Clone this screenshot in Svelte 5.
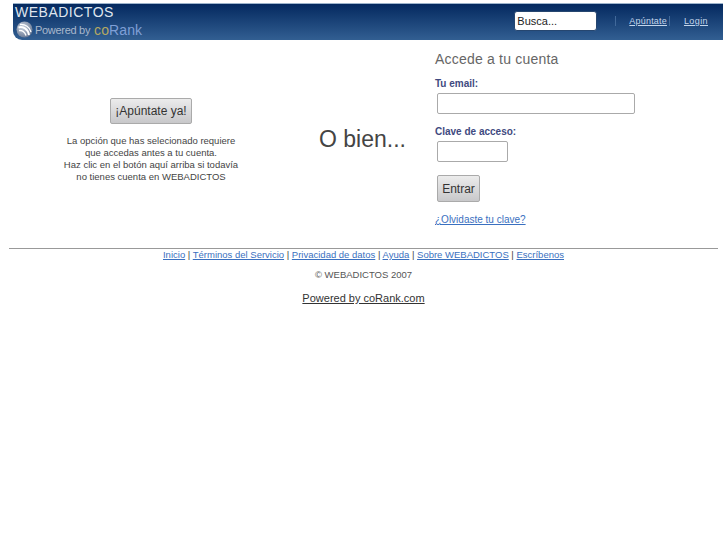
<script>
	const links = ['Inicio', 'Términos del Servicio', 'Privacidad de datos', 'Ayuda', 'Sobre WEBADICTOS', 'Escríbenos'];
</script>

<div class="page">
	<header class="topbar">
		<div class="brand">
			<div class="site-name">WEBADICTOS</div>
			<div class="powered">
				<svg class="logo" width="17" height="17" viewBox="0 0 17 17">
					<defs>
						<radialGradient id="ball" cx="0.4" cy="0.35" r="0.75">
							<stop offset="0" stop-color="#c9d2de" />
							<stop offset="1" stop-color="#5f6f8c" />
						</radialGradient>
					</defs>
					<circle cx="8.5" cy="8.5" r="8" fill="url(#ball)" />
					<path d="M2.5 6.5 C7 5 12 8 13 14" fill="none" stroke="#fff" stroke-width="2" />
					<path d="M4 3.5 C9 3 14 6 15 11" fill="none" stroke="#fff" stroke-width="1.3" />
					<path d="M3 9.5 C6 9 9 11 10 14.5" fill="none" stroke="#fff" stroke-width="1.5" />
				</svg>
				<span class="by">Powered by</span>
				<span class="corank"><span class="co">co</span>Rank</span>
			</div>
		</div>
		<div class="tools">
			<input class="search" value="Busca..." />
			<span class="sep first"></span>
			<a href="#a">Apúntate</a>
			<span class="sep"></span>
			<a class="login" href="#l">Login</a>
		</div>
	</header>

	<main class="content">
		<section class="signup">
			<button class="btn big">¡Apúntate ya!</button>
			<p>
				La opción que has selecionado requiere<br />
				que accedas antes a tu cuenta.<br />
				Haz clic en el botón aquí arriba si todavía<br />
				no tienes cuenta en WEBADICTOS
			</p>
		</section>
		<section class="or">O bien...</section>
		<section class="login-form">
			<h2>Accede a tu cuenta</h2>
			<label for="email">Tu email:</label>
			<input id="email" class="field email" />
			<label for="pass" class="second">Clave de acceso:</label>
			<input id="pass" class="field pass" />
			<button class="btn enter">Entrar</button>
			<a class="forgot" href="#f">¿Olvidaste tu clave?</a>
		</section>
	</main>

	<hr />

	<footer>
		<div class="links">
			{#each links as link, i}
				<a href="#x">{link}</a>{#if i < links.length - 1}{' | '}{/if}
			{/each}
		</div>
		<div class="copy">© WEBADICTOS 2007</div>
		<a class="power" href="#p">Powered by coRank.com</a>
	</footer>
</div>

<style>
	:global(body) {
		margin: 0;
		background: #fff;
	}

	.page {
		font-family: "Liberation Sans", Arial, sans-serif;
		color: #444;
		padding-top: 3px;
	}

	.topbar {
		display: flex;
		justify-content: space-between;
		box-sizing: border-box;
		height: 37px;
		margin: 0 4px 0 13px;
		border-top: 1px solid #9db4cc;
		border-bottom-left-radius: 9px;
		background: linear-gradient(#04295f, #325f92);
		color: #fff;
	}

	.brand {
		padding-left: 2px;
	}

	.site-name {
		font-size: 14px;
		letter-spacing: 0.5px;
		line-height: 16px;
		color: #dfe5ee;
	}

	.powered {
		display: flex;
		align-items: center;
		height: 19px;
		margin-left: 1px;
	}

	.logo {
		margin-right: 2px;
	}

	.by {
		font-size: 11px;
		letter-spacing: -0.3px;
		color: #a9b8cc;
	}

	.corank {
		margin-left: 4px;
		font-size: 14px;
		letter-spacing: 0.1px;
		color: #7f9fd6;
	}

	.co {
		color: #b5a862;
	}

	.tools {
		display: flex;
		align-items: center;
		padding: 0 15px 2px 0;
		font-size: 9px;
	}

	.tools a {
		color: #c4d6ec;
		letter-spacing: 0.2px;
		font-weight: 500;
	}

	.search {
		box-sizing: border-box;
		width: 83px;
		height: 20px;
		padding: 0 2px;
		border: 1px solid #26466f;
		border-radius: 3px;
		font: 11px "Liberation Sans", Arial, sans-serif;
		color: #222;
	}

	.sep {
		width: 1px;
		height: 10px;
		margin: 0 3px 0 2px;
		background: #41699a;
	}

	.sep.first {
		margin: 0 13px 0 18px;
	}

	.tools .login {
		margin-left: 11px;
		letter-spacing: 0.4px;
	}

	.content {
		display: flex;
		height: 208px;
	}

	.signup {
		box-sizing: border-box;
		width: 302px;
		padding-top: 58px;
		text-align: center;
	}

	.signup p {
		margin: 11px 0 0;
		font-size: 9.5px;
		line-height: 12px;
		color: #444;
	}

	.btn {
		box-sizing: border-box;
		border: 1px solid #aaa;
		border-radius: 2px;
		background: linear-gradient(#ececec, #c8c8ca);
		font: 12px "Liberation Sans", Arial, sans-serif;
		color: #333;
		padding: 0;
	}

	.big {
		width: 82px;
		height: 26px;
	}

	.or {
		box-sizing: border-box;
		width: 133px;
		padding: 85px 0 0 17px;
		font-size: 23px;
		line-height: 28px;
		color: #444;
	}

	.login-form {
		display: flex;
		flex-direction: column;
		align-items: flex-start;
		padding-top: 11px;
	}

	h2 {
		margin: 0;
		font-size: 14px;
		letter-spacing: 0.2px;
		font-weight: normal;
		line-height: 17px;
		color: #666;
	}

	label {
		margin-top: 10px;
		font-size: 10px;
		font-weight: bold;
		line-height: 12px;
		color: #3f4a80;
	}

	label.second {
		margin-top: 12px;
	}

	.field {
		box-sizing: border-box;
		height: 21px;
		margin: 3px 0 0 2px;
		border: 1px solid #aaa;
		border-radius: 2px;
		background: #fff;
	}

	.email {
		width: 198px;
	}

	.pass {
		width: 71px;
	}

	.enter {
		width: 43px;
		height: 27px;
		margin: 13px 0 0 2px;
	}

	.forgot {
		margin-top: 12px;
		font-size: 10px;
		color: #3a70c0;
	}

	hr {
		height: 1px;
		margin: 0 9px;
		border: 0;
		background: #999;
	}

	footer {
		text-align: center;
		font-size: 9.5px;
	}

	.links {
		line-height: 12px;
		color: #444;
	}

	.links a {
		color: #3a70c0;
	}

	.copy {
		margin-top: 8px;
		line-height: 12px;
		color: #555;
	}

	.power {
		display: inline-block;
		margin-top: 11px;
		font-size: 11px;
		line-height: 13px;
		color: #333;
	}
</style>
